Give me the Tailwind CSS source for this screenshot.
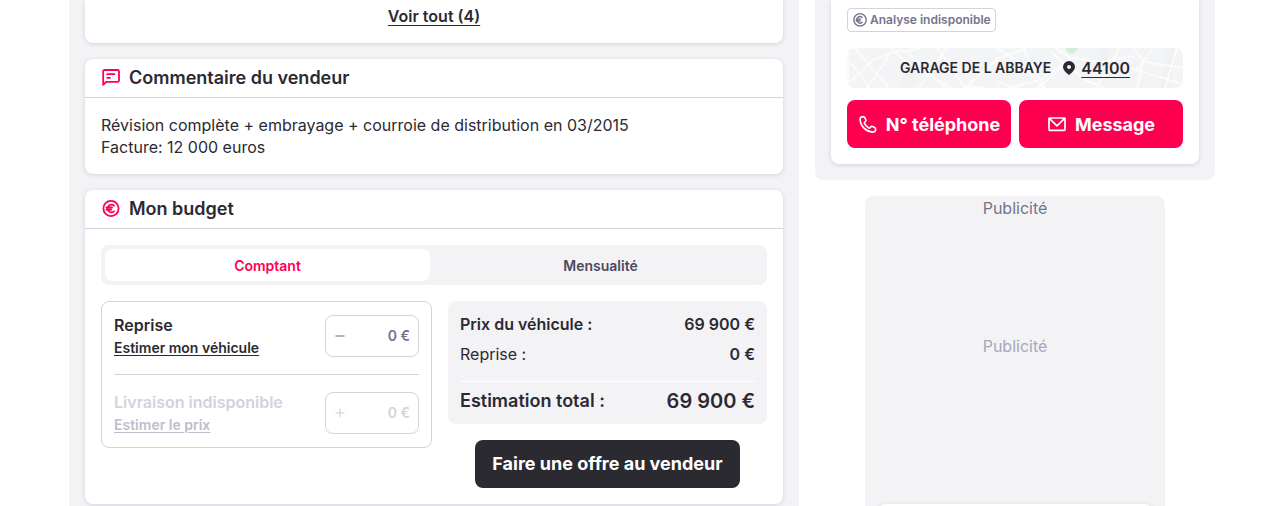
<!DOCTYPE html>
<html lang="fr">
<head>
  <meta charset="UTF-8" />
  <meta name="viewport" content="width=device-width, initial-scale=1" />
  <title>Annonce : Garage de l Abbaye</title>
  <script src="https://cdn.jsdelivr.net/npm/@tailwindcss/browser@4"></script>
  <style>
    body {
      font-family: 'Inter', sans-serif;
    }
  </style>
</head>
<body class="bg-white text-[#2b2a33] text-base">

  <div class="flex items-stretch gap-4 pl-[69px] pr-[46px] h-screen overflow-hidden">

    <!-- Main column -->
    <main class="flex-1 min-w-0 bg-[#f3f3f6] px-4 space-y-4">

      <section class="bg-white rounded-b-lg shadow-[0_1px_4px_rgba(43,42,80,0.16)] pt-1 pb-[15px] text-center">
        <a href="#" class="font-semibold leading-6 underline decoration-1 underline-offset-[3px]">Voir tout (4)</a>
      </section>

      <!-- Seller comment -->
      <section class="bg-white rounded-lg shadow-[0_1px_4px_rgba(43,42,80,0.16)]">
        <h2 class="flex items-center gap-2 h-[39px] px-4 border-b border-[#d3d2dd] text-lg font-semibold">
          <svg class="w-5 h-5 text-[#ff0050]" viewBox="0 0 20 20" fill="none" stroke="currentColor" stroke-width="1.8" stroke-linecap="round" stroke-linejoin="round">
            <path d="M2.2 16.8V3.4q0-1.400 1.400-1.400h13q1.400 0 1.400 1.400v9q0 1.400-1.400 1.400H5.200z" />
            <path d="M6.200 6.200h7.200M6.200 9.800h2.800" />
          </svg>
          Commentaire du vendeur
        </h2>
        <p class="p-4 leading-[22px]">Révision complète + embrayage + courroie de distribution en 03/2015<br />Facture: 12 000 euros</p>
      </section>

      <!-- Budget -->
      <section class="bg-white rounded-lg shadow-[0_1px_4px_rgba(43,42,80,0.16)]">
        <h2 class="flex items-center gap-2 h-[39px] px-4 border-b border-[#d3d2dd] text-lg font-semibold">
          <svg class="w-5 h-5 text-[#ff0050]" viewBox="0 0 20 20" fill="none" stroke="currentColor" stroke-width="1.8" stroke-linecap="round">
            <circle cx="10" cy="9.5" r="7.6" />
            <path d="M13 6.700a3.800 3.800 0 1 0 0 5.600M5.400 8.500h5.600M5.400 10.700h5" />
          </svg>
          Mon budget
        </h2>

        <div class="p-4">
          <div class="grid grid-cols-2 gap-2 p-1 rounded-lg bg-[#f3f3f6] text-sm font-semibold">
            <button type="button" class="h-8 pt-0.5 rounded-lg bg-white text-[#ff0050]">Comptant</button>
            <button type="button" class="h-8 pt-0.5 rounded-lg text-[#4c4a60]">Mensualité</button>
          </div>

          <div class="flex items-start gap-4 mt-4">
            <div class="flex-1 border border-[#d3d2dd] rounded-lg p-3">
              <div class="flex items-center justify-between h-11">
                <div>
                  <label for="reprise" class="block font-semibold leading-6">Reprise</label>
                  <a href="#" class="block text-sm leading-[22px] font-semibold underline decoration-1 underline-offset-2">Estimer mon véhicule</a>
                </div>
                <div class="flex items-center w-[94px] h-[42px] px-2 border border-[#d3d2dd] rounded-lg text-sm font-semibold text-[#75738c]">
                  <button type="button" aria-label="Modifier la reprise" class="shrink-0">
                    <svg class="w-3 h-3 text-[#b4b2c2]" viewBox="0 0 12 12" stroke="currentColor" stroke-width="2"><path d="M1.5 6h9" /></svg>
                  </button>
                  <input id="reprise" type="text" value="0 €" class="w-full min-w-0 text-right outline-none" />
                </div>
              </div>
              <hr class="my-4 border-[#d3d2dd]" />
              <div class="flex items-center justify-between h-11">
                <div>
                  <label for="livraison" class="block font-semibold leading-6 text-[#d3d2dd]">Livraison indisponible</label>
                  <a href="#" class="block text-sm leading-[22px] font-semibold text-[#bfbdcc] underline decoration-1 underline-offset-2">Estimer le prix</a>
                </div>
                <div class="flex items-center w-[94px] h-[42px] px-2 border border-[#d3d2dd] rounded-lg text-sm font-semibold text-[#d3d2dd]">
                  <button type="button" disabled aria-label="Modifier la livraison" class="shrink-0">
                    <svg class="w-3 h-3 text-[#dddce5]" viewBox="0 0 12 12" stroke="currentColor" stroke-width="1.6"><path d="M1.5 6h9M6 1.5v9" /></svg>
                  </button>
                  <input id="livraison" type="text" value="0 €" disabled class="w-full min-w-0 text-right outline-none" />
                </div>
              </div>
            </div>

            <div class="w-[319px] shrink-0">
              <dl class="bg-[#f3f3f6] rounded-lg px-3 pt-3 pb-[11px]">
                <div class="flex justify-between leading-[22px] font-semibold">
                  <dt>Prix du véhicule :</dt>
                  <dd>69&#8197;900 €</dd>
                </div>
                <div class="flex justify-between leading-[22px] mt-2">
                  <dt>Reprise :</dt>
                  <dd class="font-semibold">0 €</dd>
                </div>
                <div class="flex items-center justify-between leading-6 font-semibold mt-4 pt-[7px] border-t border-white">
                  <dt class="text-lg leading-6">Estimation total :</dt>
                  <dd class="text-xl leading-6">69&#8197;900 €</dd>
                </div>
              </dl>
              <div class="mt-4 text-center">
                <button type="button" class="h-12 px-[17px] rounded-lg bg-[#2b2a31] text-white text-lg font-bold">Faire une offre au vendeur</button>
              </div>
            </div>
          </div>
        </div>
      </section>
    </main>

    <!-- Side column -->
    <aside class="w-[400px] shrink-0">
      <div class="bg-[#f3f3f6] rounded-b-lg px-4 pb-4">
        <section class="bg-white rounded-b-lg shadow-[0_1px_4px_rgba(43,42,80,0.16)] px-4 pt-2 pb-4">
          <div class="flex items-center gap-0.5 w-fit h-6 px-1 border border-[#d3d2dd] rounded text-xs font-semibold text-[#75738c]">
            <svg class="w-4 h-4" viewBox="0 0 16 16" fill="none" stroke="currentColor" stroke-width="1.4" stroke-linecap="round">
              <circle cx="8" cy="7.8" r="6.2" />
              <path d="M10.2 5.4a3.2 3.2 0 1 0 0 4.8M4.2 7.1h4.4M4.2 8.7h4" />
            </svg>
            Analyse indisponible
          </div>

          <div class="relative mt-4 h-10 rounded-lg overflow-hidden bg-[#f3f4f6]">
            <svg class="absolute inset-0 w-full h-full" viewBox="0 0 336 40" preserveAspectRatio="none" fill="none" stroke="#fcfcfd" stroke-width="1.8">
              <path d="M60 12l12 3-8 25h-12zM250 0h14l-5 16-8 4zM318 0h10l-4 40h-10z" fill="#eff1f3" stroke="none" />
              <path d="M218 0h14l-5 5-5 1z" fill="#d5ecd9" stroke="none" />
              <path d="M1 0v40M3 14l20 26M8 0l34 40M3 34L26 12 54 2M20 40L34 20 44 4M44 0l10 10 50 30M56 4L74 0M62 6l36 34M72 40L100 0M90 0l12 16 16 24" />
              <path d="M118 40l34-30 28-10M150 0l22 14 24 26M176 0l8 16 14 24M162 40l32-8 30-22M208 0l16 10 30 4 34-6M224 10l-14 14-20 16M204 4l34 28 20 8" />
              <path d="M248 40l16-22 8-18M286 0l12 14 38 6M296 14l-6 26M282 20l54 16M306 0l-16 22M330 0l-12 40M118 38l20 2M150 34l20 6" />
            </svg>
            <div class="relative flex items-center justify-center h-full">
              <span class="text-sm font-semibold">GARAGE DE L ABBAYE</span>
              <svg class="w-4 h-4 ml-[10px] mr-1" viewBox="0 0 16 16" fill="currentColor">
                <path fill-rule="evenodd" d="M8 1a6 6 0 0 0-6 6c0 3 2.500 5 6 8 3.500-3 6-5 6-8a6 6 0 0 0-6-6zm0 4a2 2 0 1 1 0 4 2 2 0 0 1 0-4z" />
              </svg>
              <a href="#" class="font-semibold underline decoration-1 underline-offset-[3px]">44100</a>
            </div>
          </div>

          <div class="grid grid-cols-2 gap-2 mt-3 text-lg font-bold text-white">
            <button type="button" class="flex items-center justify-center gap-2 h-12 pt-0.5 rounded-lg bg-[#ff0050]">
              <svg class="w-5 h-5" viewBox="0 0 20 20" fill="none" stroke="currentColor" stroke-width="1.6" stroke-linecap="round" stroke-linejoin="round">
                <path d="M4.800 1.600C3.400 1.600 2.100 2.800 2.100 4.600 2.500 11.200 8 16.600 14.600 17.100c1.700 0 3-1.200 3.100-2.600.1-1-.4-1.500-1.200-2l-1.800-.9c-.8-.4-1.500-.2-2 .4l-.6.8c-.3.400-.8.500-1.300.2C9 11.900 7.400 10.300 6.400 8.400c-.2-.5-.1-.9.300-1.200l.7-.6c.6-.5.700-1.100.4-1.800l-.9-2c-.4-.8-1.100-1.300-2.100-1.200z" />
              </svg>
              N° téléphone
            </button>
            <button type="button" class="flex items-center justify-center gap-2 h-12 pt-0.5 rounded-lg bg-[#ff0050]">
              <svg class="w-5 h-5" viewBox="0 0 20 20" fill="none" stroke="currentColor" stroke-width="1.7" stroke-linejoin="round">
                <rect x="2" y="3" width="16" height="12.400" rx="0.6" />
                <path d="M2.600 3.600l7.400 7.200 7.400-7.200" />
              </svg>
              Message
            </button>
          </div>
        </section>
      </div>

      <!-- Ad slot -->
      <div class="w-[300px] mx-auto mt-4 rounded-t-lg bg-[#f3f3f6] text-center">
        <p class="leading-6 text-[#75738c]">Publicité</p>
        <div class="flex items-center justify-center h-[252px] text-[#a9a7b9]">Publicité</div>
        <div class="pt-8 px-3">
          <div class="h-16 rounded-lg bg-white shadow-[0_1px_4px_rgba(43,42,80,0.16)]"></div>
        </div>
      </div>
    </aside>
  </div>

</body>
</html>
